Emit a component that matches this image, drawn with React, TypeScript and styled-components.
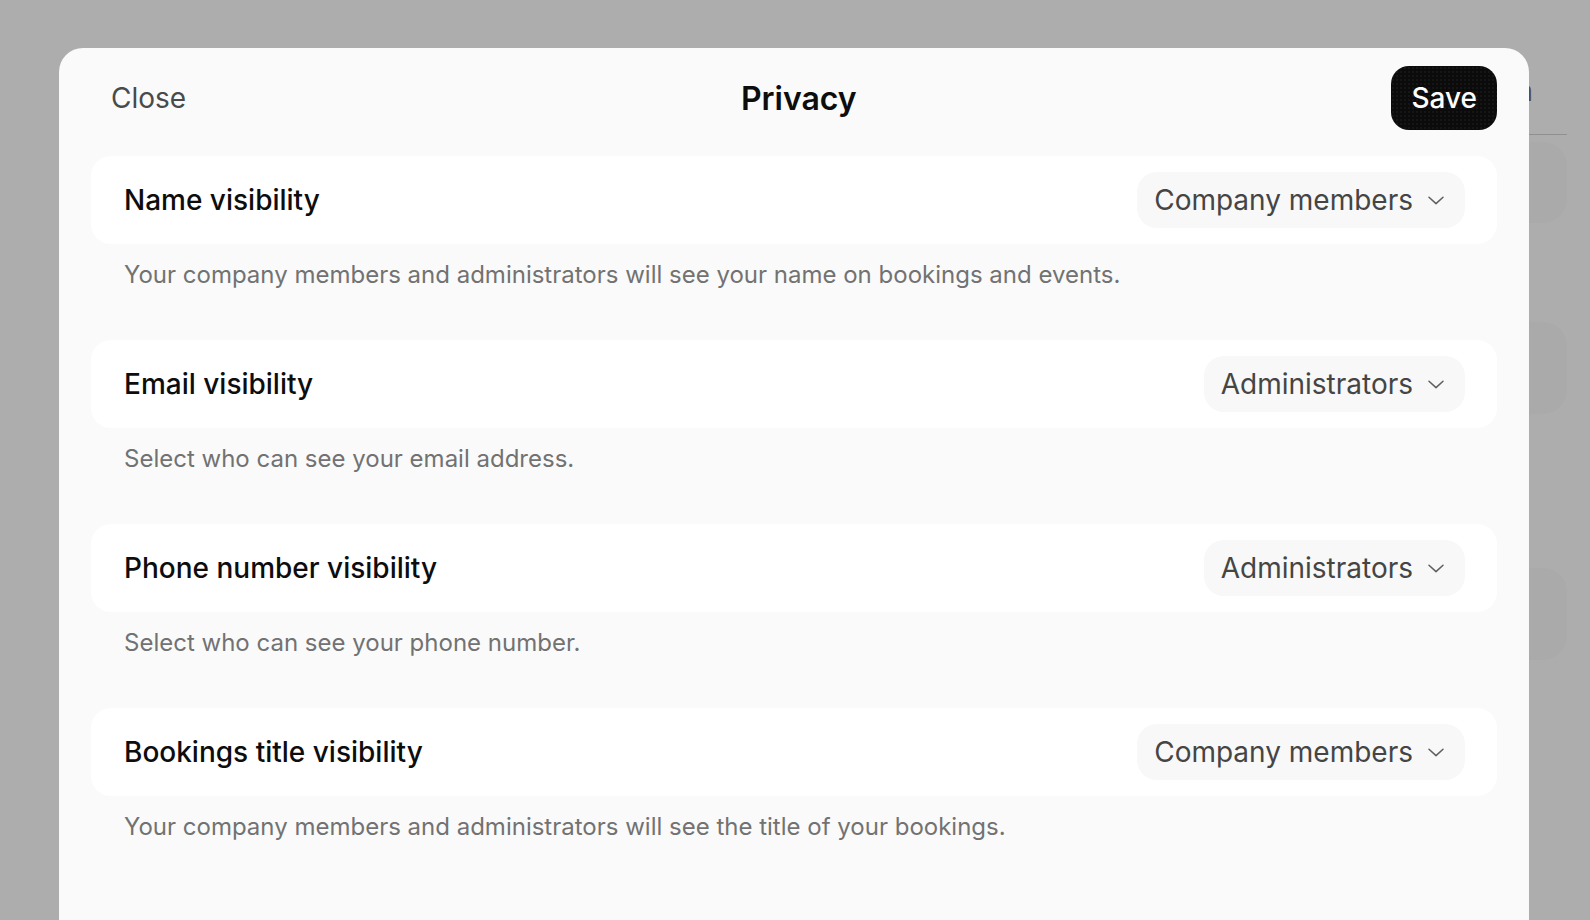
import styled, { createGlobalStyle } from "styled-components";

const GlobalStyle = createGlobalStyle`
  html, body {
    margin: 0;
    padding: 0;
    background: #ffffff;
    font-family: Inter, "Noto Sans", "Liberation Sans", sans-serif;
    -webkit-font-smoothing: antialiased;
  }
  * {
    box-sizing: border-box;
  }
`;

// page that sits behind the dialog
const Page = styled.div`
  position: relative;
  height: 100vh;
  overflow: hidden;
  background: #ffffff;
`;

const PageHeader = styled.header`
  height: 135px;
  margin: 0 23px 0 420px;
  padding: 0 34px 26px 0;
  display: flex;
  align-items: flex-end;
  justify-content: flex-end;
  border-bottom: 1px solid #d4d4d4;
`;

const PageTitle = styled.span`
  font-size: 28px;
  color: #777777;
`;

const PageBody = styled.div`
  display: flex;
  flex-direction: column;
  align-items: flex-end;
  padding: 7px 23px 0 0;
`;

const GhostCard = styled.div<{ $h: number; $mt: number }>`
  width: 360px;
  height: ${({ $h }) => $h}px;
  margin-top: ${({ $mt }) => $mt}px;
  border-radius: 24px;
  background: #fbfbfb;
`;

const Backdrop = styled.div`
  position: fixed;
  inset: 0;
  background: rgba(0, 0, 0, 0.32);
`;

const Sheet = styled.div`
  position: absolute;
  left: 59px;
  top: 48px;
  width: 1470px;
  bottom: -40px;
  background: #fafafa;
  border-radius: 24px 24px 0 0;
`;

const SheetHeader = styled.div`
  display: flex;
  align-items: center;
  justify-content: space-between;
  padding: 18px 32px 0;
`;

const CloseButton = styled.button`
  height: 64px;
  padding: 0 20px;
  border: none;
  background: none;
  font-family: inherit;
  font-size: 28px;
  color: #4a4a4a;
  cursor: pointer;
`;

const SheetTitle = styled.h1`
  margin: 0;
  font-size: 32px;
  font-weight: 600;
  color: #0d0d0d;
`;

const SaveButton = styled.button`
  height: 64px;
  padding: 0 20px;
  border: none;
  border-radius: 18px;
  background-color: #0b0b0b;
  background-image: radial-gradient(
    rgba(255, 255, 255, 0.1) 0.6px,
    transparent 0.8px
  );
  background-size: 4px 4px;
  font-family: inherit;
  font-size: 28px;
  font-weight: 500;
  color: #ffffff;
  cursor: pointer;
`;

const SettingsList = styled.div`
  padding: 26px 32px 0;
`;

const Setting = styled.section`
  margin-bottom: 49px;
`;

const Card = styled.div`
  display: flex;
  align-items: center;
  justify-content: space-between;
  padding: 16px 32px 16px 33px;
  border-radius: 20px;
  background: #ffffff;
`;

const Label = styled.span`
  font-size: 28px;
  font-weight: 500;
  color: #0d0d0d;
`;

const Select = styled.button`
  height: 56px;
  display: flex;
  align-items: center;
  gap: 15px;
  padding: 0 21px 0 17px;
  border: none;
  border-radius: 20px;
  background: #f8f8f8;
  font-family: inherit;
  font-size: 28px;
  color: #454545;
  cursor: pointer;
`;

const Hint = styled.p`
  margin: 15px 0 0 33px;
  font-size: 24px;
  line-height: 32px;
  color: #727272;
`;

const Chevron = () => (
  <svg width="16" height="9" viewBox="0 0 16 9" fill="none">
    <path
      d="M1 1.2 L8 7.6 L15 1.2"
      stroke="#5f5f5f"
      strokeWidth="1.5"
      strokeLinecap="round"
      strokeLinejoin="round"
    />
  </svg>
);

const settings = [
  {
    label: "Name visibility",
    value: "Company members",
    hint: "Your company members and administrators will see your name on bookings and events.",
  },
  {
    label: "Email visibility",
    value: "Administrators",
    hint: "Select who can see your email address.",
  },
  {
    label: "Phone number visibility",
    value: "Administrators",
    hint: "Select who can see your phone number.",
  },
  {
    label: "Bookings title visibility",
    value: "Company members",
    hint: "Your company members and administrators will see the title of your bookings.",
  },
];

export default function App() {
  return (
    <>
      <GlobalStyle />
      <Page>
        <PageHeader>
          <PageTitle>Join</PageTitle>
        </PageHeader>
        <PageBody>
          <GhostCard $h={81} $mt={0} />
          <GhostCard $h={92} $mt={99} />
          <GhostCard $h={92} $mt={154} />
        </PageBody>
        <Backdrop />
        <Sheet>
          <SheetHeader>
            <CloseButton type="button">Close</CloseButton>
            <SheetTitle>Privacy</SheetTitle>
            <SaveButton type="button">Save</SaveButton>
          </SheetHeader>
          <SettingsList>
            {settings.map((s) => (
              <Setting key={s.label}>
                <Card>
                  <Label>{s.label}</Label>
                  <Select type="button">
                    {s.value}
                    <Chevron />
                  </Select>
                </Card>
                <Hint>{s.hint}</Hint>
              </Setting>
            ))}
          </SettingsList>
        </Sheet>
      </Page>
    </>
  );
}
